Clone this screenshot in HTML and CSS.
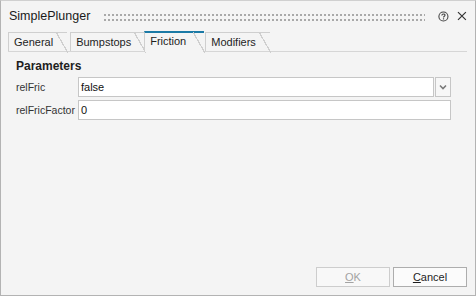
FILE: index.html
```html
<!DOCTYPE html>
<html lang="en">
<head>
    <meta charset="UTF-8">
    <title>SimplePlunger</title>
    <link rel="stylesheet" href="styles.css">
</head>
<body>
    <div class="window">
        <div class="titlebar">
            <span class="title">SimplePlunger</span>
            <svg class="grip" width="326" height="8">
                <defs>
                    <pattern id="dots" width="4" height="5" patternUnits="userSpaceOnUse">
                        <rect width="2" height="2" fill="#a9a9a9"/>
                    </pattern>
                </defs>
                <rect width="326" height="8" fill="url(#dots)"/>
            </svg>
            <svg class="help" width="11" height="11" viewBox="0 0 11 11">
                <circle cx="5.5" cy="5.5" r="4.6" fill="none" stroke="#444" stroke-width="1.1"/>
                <path d="M3.9 4.4 C3.9 3.3 4.6 2.9 5.5 2.9 C6.4 2.9 7.1 3.4 7.1 4.2 C7.1 5.2 5.6 5.2 5.6 6.4" fill="none" stroke="#444" stroke-width="1.1"/>
                <rect x="5" y="7.3" width="1.2" height="1.2" fill="#444"/>
            </svg>
            <svg class="close" width="10" height="10" viewBox="0 0 10 10">
                <path d="M1 1 L9 9 M9 1 L1 9" stroke="#333" stroke-width="1.2"/>
            </svg>
        </div>

        <div class="tabs">
            <div class="tab">General</div>
            <div class="tab">Bumpstops</div>
            <div class="tab active">Friction</div>
            <div class="tab">Modifiers</div>
        </div>

        <div class="content">
            <div class="heading">Parameters</div>
            <div class="row">
                <label>relFric</label>
                <div class="combo">
                    <div class="field">false</div>
                    <div class="drop">
                        <svg width="8" height="6" viewBox="0 0 8 6">
                            <path d="M1 1.5 L4 4.5 L7 1.5" fill="none" stroke="#7a7a7a" stroke-width="1.6"/>
                        </svg>
                    </div>
                </div>
            </div>
            <div class="row">
                <label>relFricFactor</label>
                <div class="field">0</div>
            </div>
        </div>

        <div class="footer">
            <button class="btn" disabled><u>O</u>K</button>
            <button class="btn"><u>C</u>ancel</button>
        </div>
    </div>
</body>
</html>
```

FILE: styles.css
```css
body {
    margin: 0;
    font-family: "Liberation Sans", Arial, sans-serif;
    font-size: 11px;
    color: #1e1e1e;
    background: #f4f4f4;
}
.window {
    width: 476px;
    height: 296px;
    box-sizing: border-box;
    border: 1px solid #b3b3b3;
    border-top-color: #d0d0d0;
    background: #f4f4f4;
    padding: 0 8px 8px 7px;
    display: flex;
    flex-direction: column;
}
.titlebar {
    height: 30px;
    display: flex;
    align-items: center;
}
.title {
    font-size: 12.5px;
    color: #1a1a1a;
    padding-left: 1px;
    width: 96px;
}
.grip {
    margin-top: 3px;
}
.help {
    margin-left: 13px;
}
.close {
    margin-left: 8px;
}
.tabs {
    display: flex;
    align-items: flex-end;
    height: 20px;
    border-bottom: 1px solid #d6d6d6;
}
.tab {
    position: relative;
    height: 19px;
    box-sizing: border-box;
    border-left: 1px solid #cfcfcf;
    border-top: 1px solid #cfcfcf;
    padding: 3px 14px 0 5px;
    margin-right: 3px;
    color: #1e1e1e;
}
.tab::after {
    content: "";
    position: absolute;
    top: -1px;
    right: -1px;
    width: 12px;
    height: 21px;
    background: linear-gradient(to top right, transparent calc(50% - 0.6px), #cfcfcf calc(50% - 0.6px), #cfcfcf calc(50% + 0.6px), transparent calc(50% + 0.6px));
}
.tab.active {
    height: 21px;
    margin-bottom: -1px;
    margin-left: -4px;
    margin-right: 1px;
    padding-right: 18px;
    border-top: 2px solid #1b7aa6;
    background: #f4f4f4;
    padding-top: 2px;
    z-index: 1;
}
.content {
    padding: 7px 16px 0 8px;
}
.heading {
    font-weight: bold;
    font-size: 12px;
    margin-bottom: 4px;
}
.row {
    display: grid;
    grid-template-columns: 62px 1fr;
    align-items: center;
    margin-bottom: 3px;
}
.row label {
    color: #333;
    font-size: 10.5px;
    white-space: nowrap;
}
.combo {
    display: flex;
    gap: 1px;
}
.combo .field {
    flex: 1;
}
.field {
    height: 20px;
    box-sizing: border-box;
    border: 1px solid #c6c6c6;
    background: #fff;
    padding: 3px 2px 0;
    color: #111;
}
.drop {
    width: 16px;
    height: 20px;
    box-sizing: border-box;
    border: 1px solid #c6c6c6;
    background: #f7f7f7;
    display: flex;
    align-items: center;
    justify-content: center;
}
.footer {
    margin-top: auto;
    display: flex;
    justify-content: flex-end;
    gap: 3px;
}
.btn {
    width: 74px;
    height: 20px;
    font-family: "Liberation Sans", Arial, sans-serif;
    font-size: 11px;
    color: #1e1e1e;
    background: #fbfbfb;
    border: 1px solid #adadad;
    padding: 0;
}
.btn:disabled {
    color: #a3a3a3;
    border-color: #cdcdcd;
    background: #f8f8f8;
}
```
